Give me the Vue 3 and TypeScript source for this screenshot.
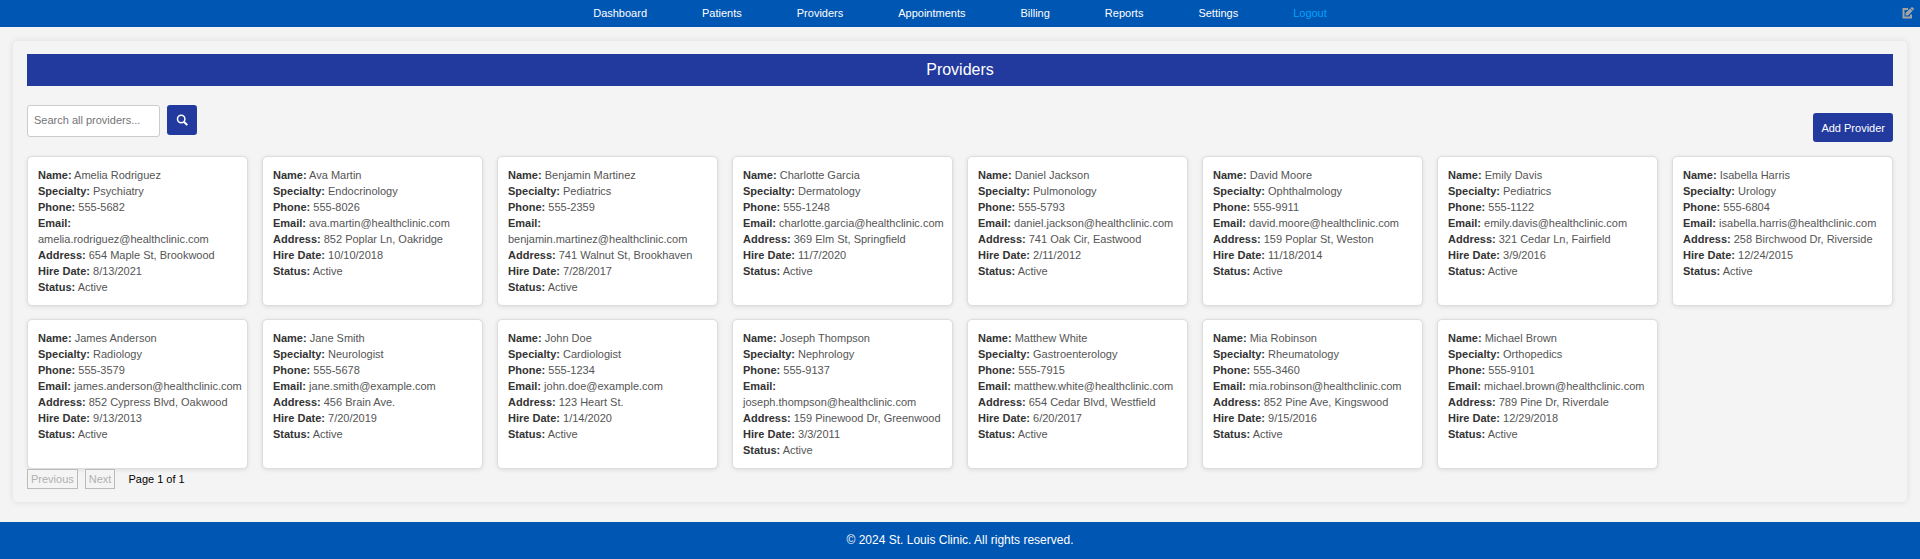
<script setup lang="ts">
import { ref } from 'vue'

interface Provider {
  name: string
  specialty: string
  phone: string
  email: string
  address: string
  hireDate: string
}

const links: string[] = ['Dashboard', 'Patients', 'Providers', 'Appointments', 'Billing', 'Reports', 'Settings']
const search = ref('')

const row = (name: string, specialty: string, phone: string, email: string, address: string, hireDate: string): Provider => ({
  name, specialty, phone, email, address, hireDate,
})

const providers: Provider[] = [
  row('Amelia Rodriguez', 'Psychiatry', '555-5682', 'amelia.rodriguez@healthclinic.com', '654 Maple St, Brookwood', '8/13/2021'),
  row('Ava Martin', 'Endocrinology', '555-8026', 'ava.martin@healthclinic.com', '852 Poplar Ln, Oakridge', '10/10/2018'),
  row('Benjamin Martinez', 'Pediatrics', '555-2359', 'benjamin.martinez@healthclinic.com', '741 Walnut St, Brookhaven', '7/28/2017'),
  row('Charlotte Garcia', 'Dermatology', '555-1248', 'charlotte.garcia@healthclinic.com', '369 Elm St, Springfield', '11/7/2020'),
  row('Daniel Jackson', 'Pulmonology', '555-5793', 'daniel.jackson@healthclinic.com', '741 Oak Cir, Eastwood', '2/11/2012'),
  row('David Moore', 'Ophthalmology', '555-9911', 'david.moore@healthclinic.com', '159 Poplar St, Weston', '11/18/2014'),
  row('Emily Davis', 'Pediatrics', '555-1122', 'emily.davis@healthclinic.com', '321 Cedar Ln, Fairfield', '3/9/2016'),
  row('Isabella Harris', 'Urology', '555-6804', 'isabella.harris@healthclinic.com', '258 Birchwood Dr, Riverside', '12/24/2015'),
  row('James Anderson', 'Radiology', '555-3579', 'james.anderson@healthclinic.com', '852 Cypress Blvd, Oakwood', '9/13/2013'),
  row('Jane Smith', 'Neurologist', '555-5678', 'jane.smith@example.com', '456 Brain Ave.', '7/20/2019'),
  row('John Doe', 'Cardiologist', '555-1234', 'john.doe@example.com', '123 Heart St.', '1/14/2020'),
  row('Joseph Thompson', 'Nephrology', '555-9137', 'joseph.thompson@healthclinic.com', '159 Pinewood Dr, Greenwood', '3/3/2011'),
  row('Matthew White', 'Gastroenterology', '555-7915', 'matthew.white@healthclinic.com', '654 Cedar Blvd, Westfield', '6/20/2017'),
  row('Mia Robinson', 'Rheumatology', '555-3460', 'mia.robinson@healthclinic.com', '852 Pine Ave, Kingswood', '9/15/2016'),
  row('Michael Brown', 'Orthopedics', '555-9101', 'michael.brown@healthclinic.com', '789 Pine Dr, Riverdale', '12/29/2018'),
]
</script>

<template>
  <div class="page">
    <nav class="nav">
      <a v-for="link in links" :key="link" href="#" class="nav-link">{{ link }}</a>
      <a href="#" class="nav-link logout">Logout</a>
      <button type="button" class="edit" aria-label="Edit">
        <svg viewBox="0 0 12 12" width="12" height="12" aria-hidden="true">
          <path d="M6 2H1.5v8.5H9V7.5" fill="none" stroke="currentColor" stroke-width="2" />
          <path d="M3.5 8.5V6L8 1.5l2.5 2.5L6 8.5z" fill="currentColor" />
          <path d="M8.4 1.2L9.5.2h1L11.8 1.5v1L10.8 3.6z" fill="currentColor" />
        </svg>
      </button>
    </nav>

    <main class="panel">
      <h1 class="title">Providers</h1>
      <div class="toolbar">
        <form class="search" @submit.prevent>
          <input v-model="search" class="search-input" type="text" placeholder="Search all providers..." aria-label="Search all providers" />
          <button type="submit" class="search-button" aria-label="Search">
            <svg viewBox="0 0 12 12" width="12" height="12" aria-hidden="true">
              <circle cx="5.2" cy="5" r="3.7" fill="none" stroke="currentColor" stroke-width="1.5" />
              <path d="M7.9 7.7L11.3 11.1" stroke="currentColor" stroke-width="2" />
            </svg>
          </button>
        </form>
        <button type="button" class="add">Add Provider</button>
      </div>

      <section class="grid">
        <article v-for="p in providers" :key="p.name" class="card">
          <p><strong>Name:</strong> {{ p.name }}</p>
          <p><strong>Specialty:</strong> {{ p.specialty }}</p>
          <p><strong>Phone:</strong> {{ p.phone }}</p>
          <p><strong>Email:</strong> {{ p.email }}</p>
          <p><strong>Address:</strong> {{ p.address }}</p>
          <p><strong>Hire Date:</strong> {{ p.hireDate }}</p>
          <p><strong>Status:</strong> Active</p>
        </article>
      </section>

      <div class="pagination">
        <button type="button" class="pager" disabled>Previous</button>
        <button type="button" class="pager" disabled>Next</button>
        <span class="page-info">Page 1 of 1</span>
      </div>
    </main>

    <footer class="footer">© 2024 St. Louis Clinic. All rights reserved.</footer>
  </div>
</template>

<style>
body {
  margin: 0;
  background: #f4f4f4;
}
</style>

<style scoped>
.page {
  font-family: "Liberation Sans", Arial, sans-serif;
  font-size: 11px;
  line-height: 16px;
  color: #000;
}
.page * {
  box-sizing: border-box;
}
button,
input {
  font: inherit;
}
.nav {
  position: relative;
  display: flex;
  justify-content: center;
  gap: 55px;
  padding: 5px 0 6px;
  background: #0056b3;
}
.nav-link {
  color: #fff;
  text-decoration: none;
}
.logout {
  color: #00a2ff;
}
.edit {
  position: absolute;
  top: 7px;
  right: 6px;
  display: flex;
  padding: 0;
  border: 0;
  background: none;
  color: #a3a3a3;
}
.panel {
  margin: 14px 13px 20px;
  padding: 13px 14px;
  border-radius: 5px;
  box-shadow: 0 0 7px rgba(0, 0, 0, 0.1);
}
.title {
  margin: 0;
  padding: 6px;
  background: #223a9e;
  color: #fff;
  font-size: 16px;
  font-weight: 400;
  line-height: 20px;
  text-align: center;
}
.toolbar {
  display: flex;
  justify-content: space-between;
  align-items: flex-start;
  padding: 19px 0 14px;
}
.search {
  display: flex;
  align-items: flex-start;
  gap: 7px;
}
.search-input {
  width: 133px;
  height: 32px;
  padding: 0 6px 2px;
  border: 1px solid #ccc;
  border-radius: 3px;
  background: #fff;
}
.search-input::placeholder {
  color: #757575;
}
.search-button {
  display: flex;
  align-items: center;
  justify-content: center;
  width: 30px;
  height: 30px;
  padding: 0;
  border: 0;
  border-radius: 3px;
  background: #223a9e;
  color: #fff;
}
.add {
  margin-top: 8px;
  padding: 7px 8px 6px;
  border: 0;
  border-radius: 3px;
  background: #223a9e;
  color: #fff;
}
.grid {
  display: grid;
  grid-template-columns: repeat(auto-fill, minmax(200px, 1fr));
  gap: 13px 14px;
}
.card {
  padding: 10px 5px 10px 10px;
  border: 1px solid #ddd;
  border-radius: 5px;
  background: #fff;
  box-shadow: 0 1px 4px rgba(0, 0, 0, 0.1);
  color: #555;
}
.card p {
  margin: 0;
}
.card strong {
  color: #333;
}
.pagination {
  display: flex;
  align-items: center;
  gap: 7px;
}
.pager {
  padding: 1px 3px;
  border: 1px solid #bbb;
  background: #f4f4f4;
  color: #b0b0b0;
}
.page-info {
  margin-left: 6px;
}
.footer {
  padding: 10px 0 11px;
  background: #0056b3;
  color: #fff;
  font-size: 12px;
  text-align: center;
}
</style>
